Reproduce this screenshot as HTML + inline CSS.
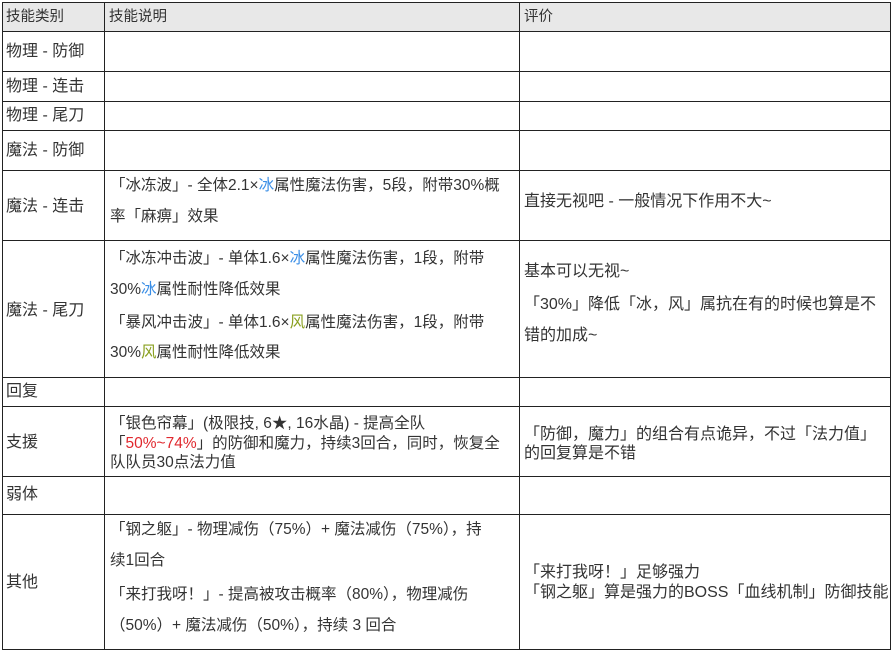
<!DOCTYPE html>
<html><head><meta charset="utf-8"><style>
body{margin:0;width:894px;height:652px;background:#fff;position:relative;overflow:hidden;font-family:"Liberation Sans","Noto Sans CJK SC",sans-serif;font-size:16px;color:#333}
.h{position:absolute;left:2px;width:889px;height:1px;background:#222}
.v{position:absolute;top:2px;width:1px;height:648px;background:#222}
.t{position:absolute;line-height:20px;white-space:nowrap}
.d{font-size:15.5px}
.b{color:#3a8ee6}.g{color:#8aa020}.r{color:#e0282e}
.hd{font-size:14.5px}
</style></head><body>
<div style="position:absolute;left:2px;top:2px;width:888px;height:29px;background:#e8e8e8"></div>
<div class="h" style="top:2px"></div><div class="h" style="top:31px"></div><div class="h" style="top:71px"></div>
<div class="h" style="top:101px"></div><div class="h" style="top:130px"></div><div class="h" style="top:170px"></div>
<div class="h" style="top:240px"></div><div class="h" style="top:377px"></div><div class="h" style="top:406px"></div>
<div class="h" style="top:476px"></div><div class="h" style="top:514px"></div><div class="h" style="top:649px"></div>
<div class="v" style="left:2px"></div><div class="v" style="left:104px"></div><div class="v" style="left:519px"></div><div class="v" style="left:890px"></div>

<div class="t hd" style="left:6px;top:7px">技能类别</div>
<div class="t hd" style="left:109px;top:7px">技能说明</div>
<div class="t hd" style="left:524px;top:7px">评价</div>

<div class="t" style="left:6px;top:42px">物理 - 防御</div>
<div class="t" style="left:6px;top:77px">物理 - 连击</div>
<div class="t" style="left:6px;top:106px">物理 - 尾刀</div>
<div class="t" style="left:6px;top:141px">魔法 - 防御</div>
<div class="t" style="left:6px;top:197px">魔法 - 连击</div>
<div class="t d" style="left:110px;top:176px">「冰冻波」- 全体2.1×<span class="b">冰</span>属性魔法伤害，5段，附带30%概</div>
<div class="t d" style="left:110px;top:207px">率「麻痹」效果</div>
<div class="t" style="left:524px;top:192px">直接无视吧 - 一般情况下作用不大~</div>

<div class="t" style="left:6px;top:301px">魔法 - 尾刀</div>
<div class="t d" style="left:110px;top:249px">「冰冻冲击波」- 单体1.6×<span class="b">冰</span>属性魔法伤害，1段，附带</div>
<div class="t d" style="left:110px;top:280px">30%<span class="b">冰</span>属性耐性降低效果</div>
<div class="t d" style="left:110px;top:313px">「暴风冲击波」- 单体1.6×<span class="g">风</span>属性魔法伤害，1段，附带</div>
<div class="t d" style="left:110px;top:343px">30%<span class="g">风</span>属性耐性降低效果</div>
<div class="t" style="left:524px;top:262px">基本可以无视~</div>
<div class="t" style="left:524px;top:295px">「30%」降低「冰，风」属抗在有的时候也算是不</div>
<div class="t" style="left:524px;top:326px">错的加成~</div>

<div class="t" style="left:6px;top:382px">回复</div>
<div class="t" style="left:6px;top:433px">支援</div>
<div class="t d" style="left:110px;top:414px">「银色帘幕」(极限技, 6★, 16水晶) - 提高全队</div>
<div class="t d" style="left:110px;top:434px">「<span class="r">50%~74%</span>」的防御和魔力，持续3回合，同时，恢复全</div>
<div class="t d" style="left:110px;top:453px">队队员30点法力值</div>
<div class="t" style="left:524px;top:425px">「防御，魔力」的组合有点诡异，不过「法力值」</div>
<div class="t" style="left:524px;top:444px">的回复算是不错</div>

<div class="t" style="left:6px;top:485px">弱体</div>
<div class="t" style="left:6px;top:573px">其他</div>
<div class="t d" style="left:110px;top:520px">「钢之躯」- 物理减伤（75%）+ 魔法减伤（75%），持</div>
<div class="t d" style="left:110px;top:551px">续1回合</div>
<div class="t d" style="left:110px;top:585px">「来打我呀！」- 提高被攻击概率（80%），物理减伤</div>
<div class="t d" style="left:110px;top:616px">（50%）+ 魔法减伤（50%），持续 3 回合</div>
<div class="t" style="left:524px;top:563px">「来打我呀！」足够强力</div>
<div class="t" style="left:524px;top:583px">「钢之躯」算是强力的BOSS「血线机制」防御技能</div>
</body></html>
